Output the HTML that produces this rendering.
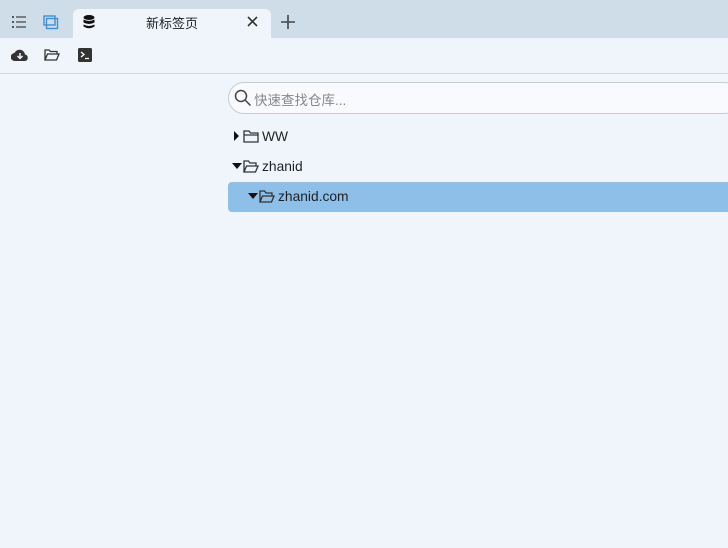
<!DOCTYPE html><html><head><meta charset="utf-8"><style>
body{margin:0;width:728px;height:548px;background:#f0f5fc;font-family:"Liberation Sans","Noto Sans CJK SC",sans-serif;position:relative;overflow:hidden}
.top{position:absolute;left:0;top:0;width:728px;height:38px;background:#cfdde8}
.tab{position:absolute;left:73px;top:9px;width:198px;height:29px;background:#f0f5fc;border-radius:6px 6px 0 0}
.tb{position:absolute;top:38px;left:0;width:728px;height:35px;border-bottom:1px solid #d3d9e0}
.abs{position:absolute}
.search{position:absolute;left:228px;top:82px;width:510px;height:30px;border:1px solid #c8ccd2;border-radius:16px;background:#f8fafd}
.row{position:absolute;font-size:13.8px;color:#222}
</style></head><body>
<div class="top"></div>
<svg class="abs" style="left:12px;top:15px" width="15" height="14" fill="#555"><rect x="0" y="1" width="2" height="2"/><rect x="4" y="1.3" width="10" height="1.4"/><rect x="0" y="6" width="2" height="2"/><rect x="4" y="6.3" width="10" height="1.4"/><rect x="0" y="11" width="2" height="2"/><rect x="4" y="11.3" width="10" height="1.4"/></svg>
<svg class="abs" style="left:43px;top:15px" width="16" height="15" fill="none" stroke="#3d8fd6" stroke-width="1.4"><rect x="1" y="1" width="11" height="9"/><rect x="3.5" y="3.5" width="11" height="10"/></svg>
<div class="tab"></div>
<svg class="abs" style="left:83px;top:15px" width="12" height="14" fill="#111"><ellipse cx="6" cy="2.5" rx="5.5" ry="2.5"/><path d="M0.5 4.5q5.5 3 11 0v3q-5.5 3-11 0z"/><path d="M0.5 9.5q5.5 3 11 0v2q-5.5 3.5-11 0z"/></svg>
<div class="abs" style="left:146px;top:13px;font-size:13px;color:#222">新标签页</div>
<svg class="abs" style="left:247px;top:16px" width="11" height="11" stroke="#333" stroke-width="1.6"><path d="M1 1L10 10M10 1L1 10"/></svg>
<svg class="abs" style="left:281px;top:15px" width="14" height="14" stroke="#444" stroke-width="1.6"><path d="M7 0V14M0 7H14"/></svg>
<div class="tb"></div>
<svg class="abs" style="left:11px;top:48px" width="18" height="14"><path d="M4 13a4 4 0 0 1-.5-8 5.5 5.5 0 0 1 10.5 1.5A3.3 3.3 0 0 1 14 13z" fill="#333"/><path d="M9 5v5M6.5 8l2.5 2.5L11.5 8" stroke="#f0f5fc" stroke-width="1.5" fill="none"/></svg>
<svg class="abs" style="left:44px;top:48px" width="16" height="14" fill="none" stroke="#333" stroke-width="1.3"><path d="M1 12V2h4l1.5 1.5H13V6M1 12l2.5-6H15l-2.5 6z"/></svg>
<svg class="abs" style="left:78px;top:48px" width="14" height="14"><rect width="14" height="14" rx="1.5" fill="#333"/><path d="M3 4l3 2.5L3 9" stroke="#fff" stroke-width="1.3" fill="none"/><path d="M7 10.5h4" stroke="#fff" stroke-width="1.3"/></svg>
<div class="search"></div>
<svg class="abs" style="left:234px;top:89px" width="18" height="18" fill="none" stroke="#444" stroke-width="1.5"><circle cx="7" cy="7" r="5.5"/><path d="M11 11l5.5 5.5"/></svg>
<div class="abs" style="left:254px;top:89px;font-size:13.5px;color:#888">快速查找仓库...</div>
<svg class="abs" style="left:234px;top:131px" width="6" height="10"><path d="M0 0l5 5-5 5z" fill="#111"/></svg>
<svg class="abs" style="left:243px;top:130px" width="16" height="13" fill="none" stroke="#333" stroke-width="1.3"><path d="M1 1h5l1.5 2H15v9H1zM1 5h14"/></svg>
<div class="row" style="left:262px;top:129px">WW</div>
<svg class="abs" style="left:232px;top:163px" width="10" height="6"><path d="M0 0h10l-5 6z" fill="#111"/></svg>
<svg class="abs" style="left:243px;top:160px" width="16" height="13" fill="none" stroke="#333" stroke-width="1.3"><path d="M1 12V1h4.5l1.5 2H13v3M1 12l2.5-6H15l-2.5 6z"/></svg>
<div class="row" style="left:262px;top:159px">zhanid</div>
<div class="abs" style="left:228px;top:182px;width:510px;height:30px;background:#8dbfe8;border-radius:4px"></div>
<svg class="abs" style="left:248px;top:193px" width="10" height="6"><path d="M0 0h10l-5 6z" fill="#111"/></svg>
<svg class="abs" style="left:259px;top:190px" width="16" height="13" fill="none" stroke="#333" stroke-width="1.3"><path d="M1 12V1h4.5l1.5 2H13v3M1 12l2.5-6H15l-2.5 6z"/></svg>
<div class="row" style="left:278px;top:189px">zhanid.com</div>
</body></html>
